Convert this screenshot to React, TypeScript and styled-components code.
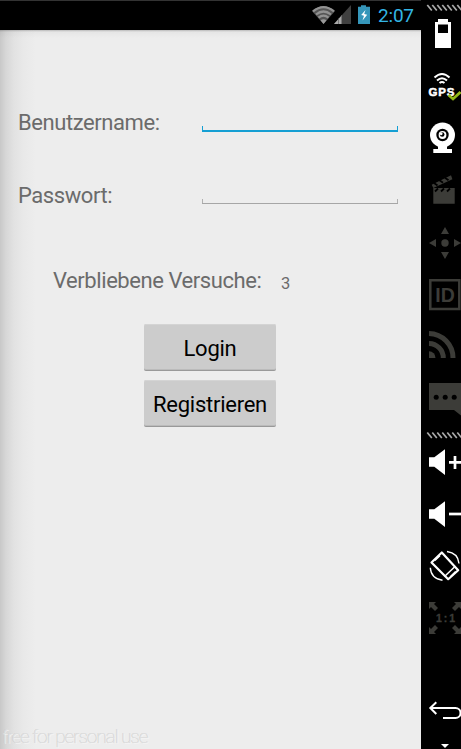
import React from "react";
import styled, { createGlobalStyle } from "styled-components";

const GlobalStyle = createGlobalStyle`
  * { box-sizing: border-box; }
  body { margin: 0; background: #000; overflow: hidden; }
`;

const Emulator = styled.div`
  display: flex;
  width: 461px;
  height: 749px;
  background: #000;
  font-family: Roboto, "Liberation Sans", sans-serif;
`;

const Device = styled.div`
  display: flex;
  flex-direction: column;
  width: 421px;
  height: 749px;
`;

const StatusBar = styled.header`
  display: flex;
  align-items: center;
  justify-content: flex-end;
  height: 30px;
  padding-right: 7px;
  border-top: 1px solid #333;
  background: #000;
`;

const Clock = styled.time`
  width: 36px;
  margin-left: 7px;
  color: #33b5e5;
  font-size: 19px;
  line-height: 29px;
  letter-spacing: -0.2px;
  white-space: nowrap;
`;

const Screen = styled.main`
  display: flex;
  flex-direction: column;
  flex: 1;
  background:
    linear-gradient(to bottom, rgba(0, 0, 0, 0.22), rgba(0, 0, 0, 0.03) 2px, transparent 8px),
    linear-gradient(to right, #c8c8c8 0, #d7d7d7 6px, #e2e2e2 14px, #e9e9e9 24px, #ededed 36px);
`;

const FieldRow = styled.label`
  display: flex;
  height: 30px;
  padding-left: 18px;
  margin-bottom: 43px;

  &:first-child { margin-top: 77px; }
`;

const Label = styled.span<{ $width: number }>`
  width: ${({ $width }) => $width}px;
  color: #6b6b6b;
  font-size: 22px;
  line-height: 32px;
  letter-spacing: -0.43px;
  white-space: nowrap;
`;

const Field = styled.input<{ $active?: boolean }>`
  align-self: flex-end;
  width: 196px;
  height: 28px;
  margin-bottom: ${({ $active }) => ($active ? 5 : 6)}px;
  padding: 0 8px;
  border: 0;
  border-bottom: ${({ $active }) => ($active ? "2px solid #159fd3" : "1px solid #a6a6a6")};
  outline: 0;
  background:
    linear-gradient(${({ $active }) => ($active ? "#159fd3, #159fd3" : "#b0b0b0, #b0b0b0")}) left bottom / 1px 4px no-repeat,
    linear-gradient(${({ $active }) => ($active ? "#159fd3, #159fd3" : "#b0b0b0, #b0b0b0")}) right bottom / 1px 4px no-repeat;
  font: 20px Roboto, sans-serif;
`;

const Attempts = styled.div`
  display: flex;
  height: 30px;
  margin-top: 12px;
  padding-left: 53px;
`;

const Count = styled.span`
  color: #6b6b6b;
  font-size: 16.5px;
  line-height: 37px;
`;

const Actions = styled.div`
  display: flex;
  flex-direction: column;
  gap: 9px;
  width: 132px;
  margin: 29px 0 0 144px;
`;

const Button = styled.button`
  height: 47px;
  padding: 2px 0 0;
  border: 0;
  border-bottom: 1px solid #999;
  border-radius: 2px;
  background: #ccc;
  box-shadow: inset 0 -1px #bbb, inset 0 1px #d4d4d4;
  color: #000;
  font: 22px Roboto, sans-serif;
  letter-spacing: -0.25px;
`;

const Watermark = styled.footer`
  margin-top: auto;
  padding-left: 2px;
  color: #e6e6e6;
  font-size: 19px;
  font-weight: 100;
  line-height: 24px;
  letter-spacing: -1.05px;
  white-space: nowrap;
  text-shadow: -0.5px -0.5px 0 #c2c2c2, 1px 1px 0 #f6f6f6;
`;

const Sidebar = styled.aside`
  display: flex;
  flex-direction: column;
  width: 40px;
  height: 749px;
  overflow: hidden;
  background: #000;
`;

const ToolButton = styled.div<{ $disabled?: boolean; $height: number }>`
  flex: none;
  height: ${({ $height }) => $height}px;
  color: ${({ $disabled }) => ($disabled ? "#3c3c38" : "#fff")};

  svg { display: block; overflow: visible; }
`;

const Spacer = styled.div`
  flex: none;
  height: 40px;
`;

type ToolProps = { disabled?: boolean; height?: number; children: React.ReactNode };

function Tool({ disabled, height = 52, children }: ToolProps) {
  return (
    <ToolButton $disabled={disabled} $height={height}>
      <svg width="40" height={height} viewBox={`0 0 40 ${height}`} fill="currentColor">
        {children}
      </svg>
    </ToolButton>
  );
}

function Hatch({ y }: { y: number }) {
  const starts = [6.3, 11.3, 16.3, 21.3, 26.3, 31.3, 36.3];
  return (
    <g stroke="#aaa" strokeWidth="1.7">
      {starts.map((x) => (
        <path key={x} d={`M${x} ${y}l4.500 5.500`} />
      ))}
    </g>
  );
}

const speaker = "M8 21.3h5.3L24 13.3V39L13.3 30.7H8z";

export default function App() {
  return (
    <>
      <GlobalStyle />
      <Emulator>
        <Device>
          <StatusBar>
            <svg width="59" height="29" viewBox="312 1 59 29">
              <path d="M312 11Q323.500 1.500 335 11L323.500 24z" fill="#555" />
              <g fill="none" stroke="#929292" strokeWidth="2.200">
                <path d="M313 11.300Q323.500 2.800 334 11.300" />
                <path d="M316 14.500Q323.500 8.500 331 14.500" />
                <path d="M318.500 17.600Q323.500 13.600 328.500 17.600" />
              </g>
              <path d="M320.500 20.300Q323.500 18 326.500 20.300L323.500 24z" fill="#999" />
              <path d="M351 5V24H334z" fill="#404040" />
              <path d="M342 15V24H334z" fill="#aaa" />
              <path d="M338.500 18v6M341.500 15v9" stroke="#555" strokeWidth=".6" />
              <path d="M361 5.300h5v1.500h4V24H358V6.800h3z" fill="#3596ba" />
              <path d="M365.500 10l-4.300 5 2.800.7-1.500 4.800 4.700-5.700-3-.8z" fill="#fff" />
            </svg>
            <Clock>2:07</Clock>
          </StatusBar>
          <Screen>
            <FieldRow>
              <Label $width={184}>Benutzername:</Label>
              <Field $active />
            </FieldRow>
            <FieldRow>
              <Label $width={184}>Passwort:</Label>
              <Field type="password" />
            </FieldRow>
            <Attempts>
              <Label $width={228}>Verbliebene Versuche:</Label>
              <Count>3</Count>
            </Attempts>
            <Actions>
              <Button>Login</Button>
              <Button>Registrieren</Button>
            </Actions>
            <Watermark>free for personal use</Watermark>
          </Screen>
        </Device>
        <Sidebar>
          <Tool height={8}><Hatch y={5} /></Tool>
          <Tool>
            <path fillRule="evenodd" d="M17 11h10v3h3v26H14V14h3zM17 16.500v8.500h10v-8.500z" />
          </Tool>
          <Tool>
            <g fill="none" stroke="currentColor" strokeWidth="2">
              <path d="M13.500 17.500Q21 10.500 28.500 17.500" />
              <path d="M16 20.500Q21 16 26 20.500" />
              <path d="M18.500 23Q21 21 23.500 23" />
            </g>
            <text x="7.500" y="36" fontFamily="Liberation Sans, sans-serif" fontWeight="700" fontSize="11.500" textLength="26" stroke="currentColor" strokeWidth=".5">GPS</text>
            <path d="M27.500 35l4.500 4 7.500-7" fill="none" stroke="#93b818" strokeWidth="2.700" />
          </Tool>
          <Tool>
            <circle cx="21.500" cy="23" r="12.500" />
            <path d="M17 33h9v4h5v4H12.300v-4H17z" />
            <circle cx="21.500" cy="23" r="6.200" fill="#000" />
            <circle cx="21.500" cy="23" r="3.900" />
            <circle cx="21.200" cy="22.500" r="2.300" fill="#000" />
            <circle cx="20.200" cy="21.800" r="1.400" />
          </Tool>
          <Tool disabled>
            <path d="M12.300 24h21.400v15.700H12.300zM10.700 20.700L30 11.300l1.400 4L12.300 24z" />
            <path d="M14 27.500l3-3M20 27.500l3-3M26 27.500l3-3M13 19l3.500 2.500M18.500 16.300l3.500 2.500M24 13.700l3.500 2.500" stroke="#000" strokeWidth="1.800" />
          </Tool>
          <Tool disabled>
            <circle cx="24" cy="27" r="3.700" />
            <path d="M24 11l4 7h-8zM24 43l4-7h-8zM8 27l7-4v8zM40 27l-7-4v8z" />
          </Tool>
          <Tool disabled>
            <path d="M9.300 12.300h29v28.700h-29z" fill="none" stroke="currentColor" strokeWidth="2.500" />
            <text x="14.300" y="34" fontFamily="Liberation Sans, sans-serif" fontWeight="700" fontSize="19.500">ID</text>
          </Tool>
          <Tool disabled>
            <g fill="none" stroke="currentColor" strokeWidth="5">
              <path d="M8 13.500A24.500 24.500 0 0 1 32 38" />
              <path d="M8 23.500A14.500 14.500 0 0 1 22.300 38" />
            </g>
            <path d="M8 31.300A6.500 6.500 0 0 1 14.500 38H8z" />
          </Tool>
          <Tool disabled>
            <path d="M8 11h32v32.500L33 38H8z" />
            <g fill="#000">
              <circle cx="15.200" cy="25.300" r="2.500" />
              <circle cx="24.200" cy="25.300" r="2.500" />
              <circle cx="33.200" cy="25.300" r="2.500" />
            </g>
          </Tool>
          <Tool height={12}><Hatch y={8.5} /></Tool>
          <Tool>
            <path d={speaker} />
            <path d="M28 26.300h12M34 20v13" stroke="currentColor" strokeWidth="2.700" />
          </Tool>
          <Tool>
            <path d={speaker} />
            <path d="M28 26h12" stroke="currentColor" strokeWidth="2.700" />
          </Tool>
          <Tool>
            <g fill="none" stroke="currentColor" strokeLinejoin="round">
              <path d="M10.500 22.500L20.800 12.500 37.200 30.200 27.200 39.200z" strokeWidth="2.200" />
              <path d="M23.500 36.500l10-9.500" strokeWidth="1.500" />
              <path d="M14 20.500l5-4.700M29.500 36.500l5-5" strokeWidth="1.200" />
              <path d="M26 11.500Q37 13 38 23.500M9.300 27.700Q10 38.500 21.500 40.200" strokeWidth="1.400" />
            </g>
          </Tool>
          <Tool disabled>
            <path d="M8 10h7l-2 2 4 4-3 3-4-4-2 2zM40 10h-7l2 2-4 4 3 3 4-4 2 2zM8 42h7l-2-2 4-4-3-3-4 4-2-2zM40 42h-7l2-2-4-4 3-3 4 4 2-2z" />
            <text x="15" y="29.700" fontFamily="Liberation Sans, sans-serif" fontWeight="700" fontSize="10.500" textLength="19" stroke="currentColor" strokeWidth=".3">1:1</text>
          </Tool>
          <Spacer />
          <Tool>
            <path d="M15.300 18.300L9.300 24l6 6M9.300 24H34.500a5 5 0 0 1 0 10H22" fill="none" stroke="currentColor" strokeWidth="2" />
          </Tool>
          <Tool height={13}>
            <path d="M20 8h8l-4 4z" />
          </Tool>
        </Sidebar>
      </Emulator>
    </>
  );
}
